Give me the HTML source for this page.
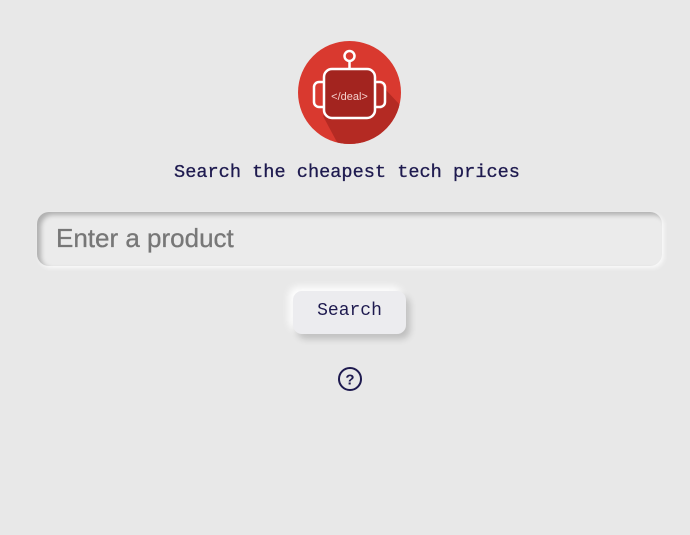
<!DOCTYPE html>
<html><head><style>
html,body{margin:0;width:690px;height:535px;background:#e8e8e8;overflow:hidden;font-family:"Liberation Sans",sans-serif}
.logo{position:absolute;left:298px;top:41px;width:103px;height:103px}
.title{position:absolute;top:162px;left:2px;width:690px;text-align:center;font-family:"Liberation Mono",monospace;font-size:18.6px;color:#1e1a4f;-webkit-text-stroke:0.3px #1e1a4f}
.inp{position:absolute;left:37px;top:212px;width:625px;height:54px;border-radius:12px;background:#ebebeb;box-shadow:inset 4px 3px 5px rgba(0,0,0,.25),2px 2px 4px #fafafa;box-sizing:border-box;padding-left:19px;line-height:52px;font-size:26px;color:#777;-webkit-text-stroke:0.3px #777}
.btn{position:absolute;left:293px;top:291px;width:113px;height:43px;border-radius:9px;background:#ececef;box-shadow:4px 5px 7px rgba(0,0,0,.18),-4px -4px 8px #fff;text-align:center;line-height:40px;font-family:"Liberation Mono",monospace;font-size:18px;color:#1e1a4f}
.help{position:absolute;left:337px;top:366px}
</style></head><body>
<svg class="logo" viewBox="0 0 103 103">
<defs><clipPath id="c"><circle cx="51.5" cy="51.5" r="51.5"/></clipPath></defs>
<circle cx="51.5" cy="51.5" r="51.5" fill="#d9392f"/>
<polygon clip-path="url(#c)" points="70,30 103,65 103,103 40,103 25,75" fill="#b42a23"/>
<rect x="26" y="28" width="51" height="49" rx="8" fill="#a3241f" stroke="#fff" stroke-width="2.5"/>
<path d="M26 41 h-5 a5 5 0 0 0 -5 5 v15 a5 5 0 0 0 5 5 h5 M77 41 h5 a5 5 0 0 1 5 5 v15 a5 5 0 0 1 -5 5 h-5" fill="none" stroke="#fff" stroke-width="2.5"/>
<line x1="51.5" y1="20" x2="51.5" y2="28" stroke="#fff" stroke-width="2.5"/>
<circle cx="51.5" cy="15" r="5" fill="none" stroke="#fff" stroke-width="2.5"/>
<text x="51.5" y="59" text-anchor="middle" font-family="Liberation Sans" font-size="11" fill="#f4d0cc">&lt;/deal&gt;</text>
</svg>
<div class="title">Search the cheapest tech prices</div>
<div class="inp">Enter a product</div>
<div class="btn">Search</div>
<svg class="help" width="26" height="26" viewBox="0 0 26 26"><circle cx="13" cy="13" r="11" fill="none" stroke="#1e1a4f" stroke-width="2"/><text x="13" y="18.5" text-anchor="middle" font-family="Liberation Sans" font-weight="bold" font-size="15" fill="#1e1a4f">?</text></svg>
</body></html>
